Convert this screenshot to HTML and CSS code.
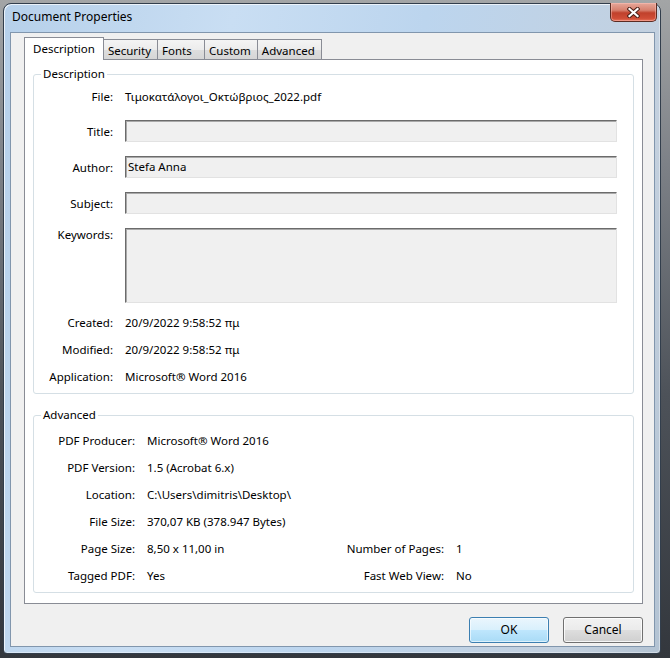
FILE: index.html
```html
<!DOCTYPE html>
<html lang="en">
<head>
    <meta charset="UTF-8">
    <title>Document Properties</title>
    <link rel="stylesheet" href="styles.css">
</head>
<body>
    <div class="window">
        <div class="titlebar">
            <span class="title">Document Properties</span>
            <button class="close-btn" title="Close">
                <svg width="13" height="11" viewBox="0 0 13 11">
                    <path d="M2.5 2 L10.5 9 M10.5 2 L2.5 9" stroke="#4a1f17" stroke-width="4.2" stroke-linecap="square"/>
                    <path d="M2.5 2 L10.5 9 M10.5 2 L2.5 9" stroke="#ffffff" stroke-width="2.2" stroke-linecap="square"/>
                </svg>
            </button>
        </div>

        <div class="client">
            <!-- Tab strip -->
            <div class="tabs">
                <div class="tab active">Description</div>
                <div class="tab">Security</div>
                <div class="tab tab-fonts">Fonts</div>
                <div class="tab">Custom</div>
                <div class="tab">Advanced</div>
            </div>

            <div class="panel">
                <fieldset class="group group-desc">
                    <legend>Description</legend>
                    <div class="row text-row">
                        <span class="label">File:</span>
                        <span class="value">Τιμοκατάλογοι_Οκτώβριος_2022.pdf</span>
                    </div>
                    <div class="row field-row first-field">
                        <span class="label">Title:</span>
                        <div class="field"></div>
                    </div>
                    <div class="row field-row">
                        <span class="label">Author:</span>
                        <div class="field">Stefa Anna</div>
                    </div>
                    <div class="row field-row">
                        <span class="label">Subject:</span>
                        <div class="field"></div>
                    </div>
                    <div class="row field-row keywords-row">
                        <span class="label">Keywords:</span>
                        <div class="field field-tall"></div>
                    </div>
                    <div class="row text-row">
                        <span class="label">Created:</span>
                        <span class="value">20/9/2022 9:58:52 πμ</span>
                    </div>
                    <div class="row text-row">
                        <span class="label">Modified:</span>
                        <span class="value">20/9/2022 9:58:52 πμ</span>
                    </div>
                    <div class="row text-row">
                        <span class="label">Application:</span>
                        <span class="value">Microsoft® Word 2016</span>
                    </div>
                </fieldset>

                <fieldset class="group group-adv">
                    <legend>Advanced</legend>
                    <div class="adv-grid">
                        <span class="label">PDF Producer:</span>
                        <span class="value wide">Microsoft® Word 2016</span>

                        <span class="label">PDF Version:</span>
                        <span class="value wide">1.5 (Acrobat 6.x)</span>

                        <span class="label">Location:</span>
                        <span class="value wide">C:\Users\dimitris\Desktop\</span>

                        <span class="label">File Size:</span>
                        <span class="value wide">370,07 KB (378.947 Bytes)</span>

                        <span class="label">Page Size:</span>
                        <span class="value">8,50 x 11,00 in</span>
                        <span class="label">Number of Pages:</span>
                        <span class="value">1</span>

                        <span class="label">Tagged PDF:</span>
                        <span class="value">Yes</span>
                        <span class="label">Fast Web View:</span>
                        <span class="value">No</span>
                    </div>
                </fieldset>
            </div>

            <div class="buttons">
                <button class="btn btn-default">OK</button>
                <button class="btn">Cancel</button>
            </div>
        </div>
    </div>
</body>
</html>
```

FILE: styles.css
```css
* {
    box-sizing: border-box;
}

body {
    margin: 0;
    width: 670px;
    height: 658px;
    overflow: hidden;
    font-family: 'Segoe UI', 'Noto Sans', 'Open Sans', sans-serif;
    font-size: 11.5px;
    line-height: 14px;
    color: #000;
    background: linear-gradient(#a3a5a6 0, #7d8187 25%, #4d5259 60%, #33373d 100%);
}

/* Aero style window frame */
.window {
    margin: 3px 9px 0 3px;
    width: 658px;
    height: 651px;
    border: 1px solid #323e4c;
    border-radius: 8px 8px 4px 4px;
    padding: 0 5px 6px 6px;
    background: linear-gradient(100deg, #b6d0ea 0%, #c9def3 30%, #bcd5ee 55%, #c3d0de 88%, #b3c3d3 100%);
    box-shadow: inset 1px 1px 0 rgba(255, 255, 255, 0.7), inset -1px -1px 0 rgba(255, 255, 255, 0.4);
    display: flex;
    flex-direction: column;
}

.titlebar {
    height: 28px;
    display: flex;
    justify-content: space-between;
    align-items: flex-start;
}

.title {
    padding: 6px 0 0 2px;
    font-size: 12px;
}

.close-btn {
    width: 47px;
    height: 19px;
    margin: -1px -2px 0 0;
    padding: 0;
    border: 1px solid #5b2b22;
    border-top: none;
    border-radius: 0 0 5px 5px;
    background: linear-gradient(#e6a89a 0%, #d7806e 40%, #c0412c 55%, #cf4d36 85%, #e8735a 100%);
    box-shadow: inset 0 0 0 1px rgba(255, 200, 190, 0.45);
    display: flex;
    align-items: center;
    justify-content: center;
}

.client {
    height: 615px;
    border: 1px solid #8196ad;
    background: #f0f0f0;
    padding: 4px 11px 3px 13px;
    display: flex;
    flex-direction: column;
}

/* Tabs */
.tabs {
    height: 22px;
    display: flex;
    align-items: flex-end;
}

.tab {
    height: 20px;
    padding: 4px 6px 0 4px;
    border: 1px solid #898c95;
    border-bottom: none;
    margin-left: -1px;
    background: linear-gradient(#f4f4f4 0%, #ececec 50%, #dedede 52%, #d6d6d6 100%);
    white-space: nowrap;
}

.tab-fonts {
    min-width: 48px;
}

.tab.active {
    height: 23px;
    margin: 0 0 -1px 0;
    padding: 4px 8px 0 8px;
    background: #fff;
    position: relative;
    z-index: 1;
}

.panel {
    height: 545px;
    border: 1px solid #898c95;
    background: #fff;
    padding: 0 8px;
}

/* Group boxes */
.group {
    margin: 0;
    border: 1px solid #d5dfe5;
    border-radius: 3px;
    min-inline-size: 0;
}

.group legend {
    margin-left: 7px;
    padding: 0 2px;
    line-height: 14px;
}

.group-desc {
    margin-top: 7px;
    padding: 9px 16px 9px 0;
}

.group-adv {
    margin-top: 14px;
    padding: 12px 16px 9px 0;
}

.row {
    display: flex;
    align-items: center;
}

.row .label {
    width: 79px;
    flex: none;
    margin-right: 12px;
    text-align: right;
    white-space: nowrap;
}

.text-row {
    height: 14px;
}

.text-row + .text-row {
    margin-top: 13px;
}

.field-row {
    margin-top: 14px;
}

.field-row .label {
    padding-top: 2px;
}

.first-field {
    margin-top: 16px;
}

.field-row + .text-row {
    margin-top: 13px;
}

.keywords-row {
    align-items: flex-start;
}

.keywords-row .label {
    padding-top: 0;
}

.field {
    flex: 1;
    height: 22px;
    padding: 3px 0 0 2px;
    background: #f0f0f0;
    border: 1px solid;
    border-color: #6b6b6b #e2e2e2 #e2e2e2 #6b6b6b;
    box-shadow: inset 1px 1px 0 #a9a9a9;
}

.field-tall {
    height: 75px;
}

.adv-grid {
    display: grid;
    grid-template-columns: 101px 186px 99px 1fr;
    grid-auto-rows: 14px;
    column-gap: 12px;
    row-gap: 13px;
}

.adv-grid .label {
    text-align: right;
    white-space: nowrap;
}

.adv-grid .wide {
    grid-column: 2 / -1;
}

/* Dialog buttons */
.buttons {
    margin-top: 13px;
    display: flex;
    justify-content: flex-end;
    gap: 14px;
}

.btn {
    width: 80px;
    height: 26px;
    padding: 0;
    font: inherit;
    font-size: 12px;
    color: #000;
    border: 1px solid #707070;
    border-radius: 3px;
    background: linear-gradient(#f2f2f2 0%, #ebebeb 48%, #dddddd 52%, #cfcfcf 100%);
    box-shadow: inset 0 0 0 1px rgba(255, 255, 255, 0.8);
}

.btn-default {
    border-color: #3c7fb1;
    background: linear-gradient(#eaf6fd 0%, #d9f0fc 48%, #bee6fd 52%, #a9dbf6 100%);
    box-shadow: inset 0 0 0 1px rgba(255, 255, 255, 0.6);
}
```
